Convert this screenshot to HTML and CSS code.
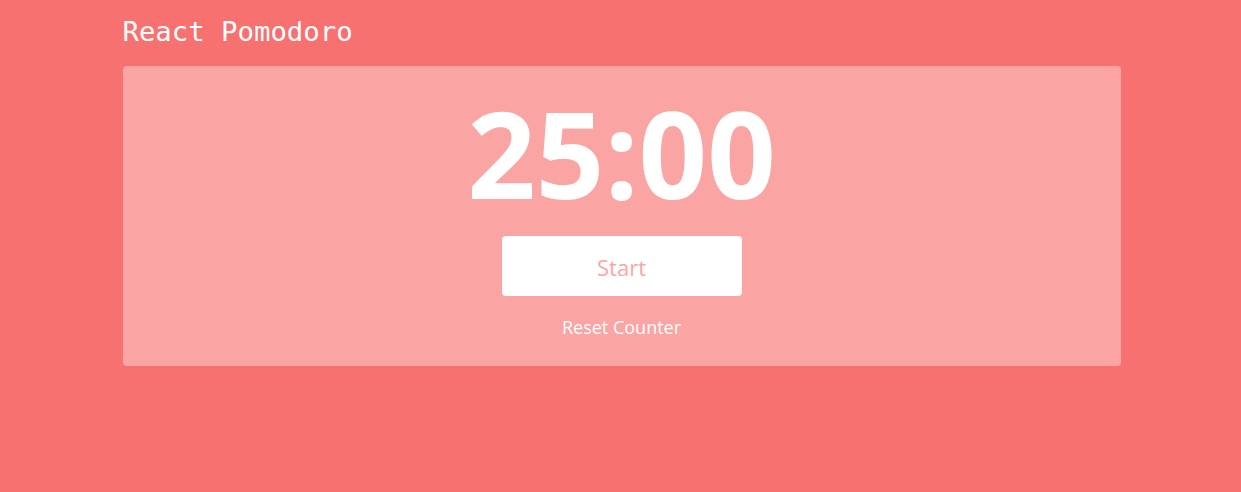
FILE: index.html
```html
<!DOCTYPE html>
<html lang="en">
<head>
<meta charset="utf-8">
<title>React Pomodoro</title>
<link rel="stylesheet" href="styles.css">
</head>
<body>
<div class="app">
  <h1 class="title">React Pomodoro</h1>
  <main class="card">
    <div class="timer">25:00</div>
    <button class="start">Start</button>
    <button class="reset">Reset Counter</button>
  </main>
</div>
</body>
</html>
```

FILE: styles.css
```css
html, body {
  margin: 0;
  padding: 0;
  height: 100%;
}
body {
  background: #f87171;
  font-family: "Open Sans", "Noto Sans", sans-serif;
  color: #fff;
}
.app {
  width: 998px;
  margin: 0 auto;
  padding-top: 16px;
  transform: translateX(1px);
}
.title {
  margin: 0 0 19px;
  font-family: "DejaVu Sans Mono", "Liberation Mono", monospace;
  font-weight: normal;
  font-size: 27.3px;
  line-height: 31px;
  color: #fff;
}
.card {
  background: rgba(255, 255, 255, 0.36);
  border-radius: 4px;
  height: 300px;
  box-sizing: border-box;
  padding-top: 27px;
  display: flex;
  flex-direction: column;
  align-items: center;
}
.timer {
  font-size: 120px;
  line-height: 120px;
  font-weight: 700;
  color: #fff;
}
.start {
  margin-top: 23px;
  width: 240px;
  height: 60px;
  border: none;
  border-radius: 4px;
  background: #fff;
  color: #fca5a5;
  font-family: inherit;
  font-size: 22px;
  padding-top: 2px;
  cursor: pointer;
}
.reset {
  margin-top: 19px;
  background: none;
  border: none;
  padding: 0;
  color: #fff;
  font-family: inherit;
  font-size: 18px;
  line-height: 24px;
  cursor: pointer;
}
```
